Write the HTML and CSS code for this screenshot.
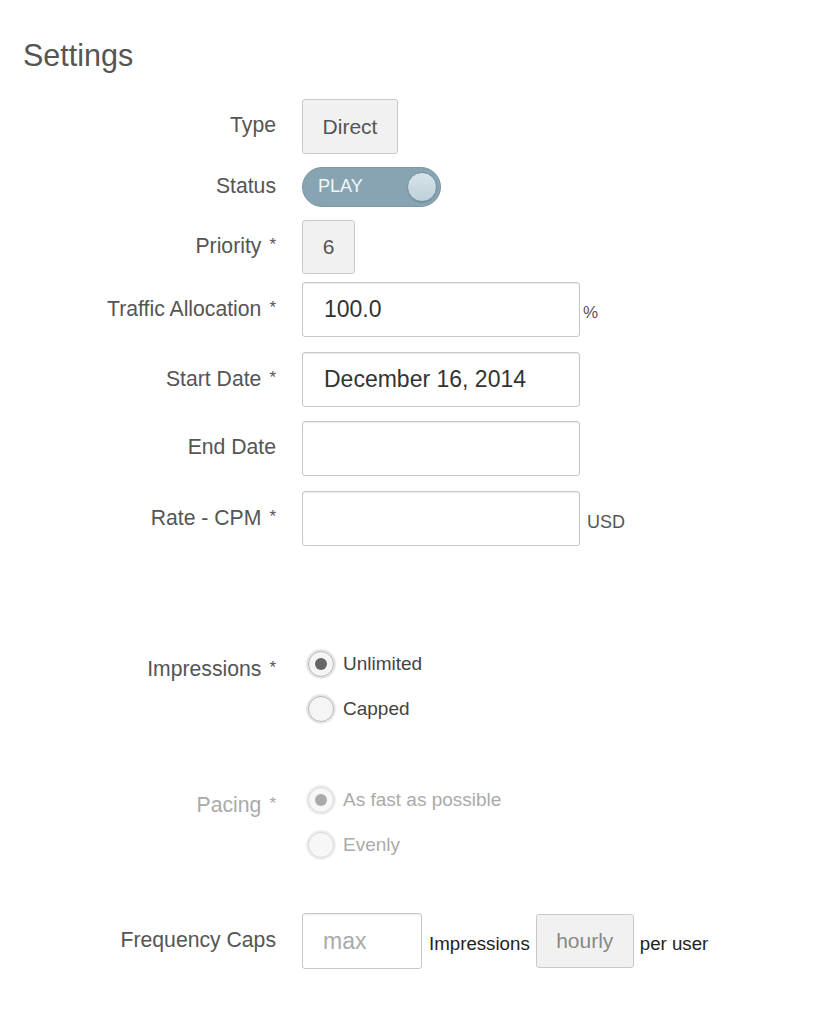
FILE: index.html
```html
<!DOCTYPE html>
<html lang="en">
<head>
<meta charset="utf-8">
<title>Settings</title>
<link rel="stylesheet" href="styles.css">
</head>
<body>
<div class="page">
  <h1 class="title">Settings</h1>
  <form class="form">
    <div class="row">
      <label class="label">Type</label>
      <div class="control"><span class="btn btn-type">Direct</span></div>
    </div>
    <div class="row gap-13">
      <label class="label">Status</label>
      <div class="control">
        <span class="toggle"><span class="toggle-text">PLAY</span><span class="knob"></span></span>
      </div>
    </div>
    <div class="row gap-13">
      <label class="label">Priority<span class="req">*</span></label>
      <div class="control"><span class="btn btn-priority">6</span></div>
    </div>
    <div class="row gap-8">
      <label class="label">Traffic Allocation<span class="req">*</span></label>
      <div class="control">
        <span class="input">100.0</span><span class="unit unit-pct">%</span>
      </div>
    </div>
    <div class="row gap-15">
      <label class="label">Start Date<span class="req">*</span></label>
      <div class="control"><span class="input">December 16, 2014</span></div>
    </div>
    <div class="row gap-14">
      <label class="label">End Date</label>
      <div class="control"><span class="input"></span></div>
    </div>
    <div class="row gap-15">
      <label class="label">Rate - CPM<span class="req">*</span></label>
      <div class="control">
        <span class="input"></span><span class="unit unit-usd">USD</span>
      </div>
    </div>

    <div class="row row-top gap-95">
      <label class="label label-group">Impressions<span class="req">*</span></label>
      <div class="radios">
        <div class="radio-item"><span class="radio checked"><span class="dot"></span></span><span class="radio-text">Unlimited</span></div>
        <div class="radio-item"><span class="radio"></span><span class="radio-text">Capped</span></div>
      </div>
    </div>

    <div class="row row-top gap-46 disabled">
      <label class="label label-group">Pacing<span class="req">*</span></label>
      <div class="radios">
        <div class="radio-item"><span class="radio checked"><span class="dot"></span></span><span class="radio-text">As fast as possible</span></div>
        <div class="radio-item"><span class="radio"></span><span class="radio-text">Evenly</span></div>
      </div>
    </div>

    <div class="row gap-46">
      <label class="label">Frequency Caps</label>
      <div class="control freq">
        <span class="input input-max">max</span>
        <span class="freq-text freq-first">Impressions</span>
        <span class="btn btn-hourly">hourly</span>
        <span class="freq-text">per user</span>
      </div>
    </div>
  </form>
</div>
</body>
</html>
```
FILE: styles.css
```css
html, body {
  margin: 0;
  padding: 0;
  background: #ffffff;
}

body {
  font-family: "Liberation Sans", Arial, Helvetica, sans-serif;
  color: #555555;
}

.page {
  padding-top: 37px;
}

.title {
  margin: 0 0 26px 23px;
  font-size: 30.5px;
  line-height: 36px;
  font-weight: 400;
  color: #555555;
}

.form {
  display: flex;
  flex-direction: column;
}

.row {
  display: grid;
  grid-template-columns: 276px auto;
  column-gap: 26px;
  align-items: center;
}

.row-top {
  align-items: start;
}

.gap-8 { margin-top: 8px; }
.gap-13 { margin-top: 13px; }
.gap-14 { margin-top: 14px; }
.gap-15 { margin-top: 15px; }
.gap-46 { margin-top: 46px; }
.gap-95 { margin-top: 95px; }

.label {
  text-align: right;
  font-size: 21.2px;
  line-height: 24px;
  color: #555555;
  padding-bottom: 3px;
}

.label-group {
  padding-top: 15px;
  padding-bottom: 0;
}

.req {
  display: inline-block;
  margin-left: 8px;
  font-size: 17px;
  vertical-align: 3px;
}

.control {
  display: flex;
  align-items: center;
}

.btn {
  box-sizing: border-box;
  display: flex;
  align-items: center;
  justify-content: center;
  background: #f1f1f1;
  border: 1px solid #c9c9c9;
  border-radius: 3px;
  font-size: 21px;
  color: #555555;
}

.btn-type {
  width: 96px;
  height: 55px;
}

.btn-priority {
  width: 53px;
  height: 54px;
}

.btn-hourly {
  width: 98px;
  height: 54px;
  color: #888888;
  margin-left: 6px;
}

.toggle {
  box-sizing: border-box;
  width: 139px;
  height: 40px;
  border-radius: 20px;
  background: #88a4b3;
  border: 1px solid #7c98a7;
  display: flex;
  align-items: center;
  justify-content: space-between;
  padding: 0 3px 0 15px;
}

.toggle-text {
  font-size: 18px;
  line-height: 20px;
  color: #f3f7f9;
  padding-bottom: 2px;
}

.knob {
  box-sizing: border-box;
  width: 30px;
  height: 30px;
  border-radius: 50%;
  background: linear-gradient(#d8e4ea, #bdd0d9);
  border: 1px solid #7893a2;
  box-shadow: 0 1px 1px rgba(0, 0, 0, 0.15);
}

.input {
  box-sizing: border-box;
  display: flex;
  align-items: center;
  width: 278px;
  height: 55px;
  padding-left: 21px;
  background: #ffffff;
  border: 1px solid #c8c8c8;
  border-radius: 3px;
  box-shadow: inset 0 1px 1px rgba(0, 0, 0, 0.08);
  font-size: 23px;
  color: #333333;
}

.unit {
  align-self: flex-end;
  font-size: 18px;
  line-height: 24px;
  margin-bottom: 12px;
  color: #555555;
}

.unit-pct {
  margin-left: 3px;
  font-size: 17px;
}

.unit-usd {
  margin-left: 7px;
}

.radios {
  display: flex;
  flex-direction: column;
  padding-left: 6px;
}

.radio-item {
  display: flex;
  align-items: center;
  height: 45px;
}

.radio {
  box-sizing: border-box;
  width: 26px;
  height: 26px;
  border-radius: 50%;
  background: #f5f5f5;
  border: 1px solid #b8b8b8;
  box-shadow: 0 0 0 2px #e8e8e8;
  display: flex;
  align-items: center;
  justify-content: center;
  margin-right: 9px;
}

.dot {
  width: 12px;
  height: 12px;
  border-radius: 50%;
  background: #666666;
}

.radio-text {
  font-size: 19px;
  line-height: 24px;
  color: #444444;
}

.disabled .label,
.disabled .radio-text {
  color: #aaaaaa;
}

.disabled .radio {
  border-color: #d8d8d8;
  background: #f7f7f7;
  box-shadow: 0 0 0 2px #eeeeee;
}

.disabled .dot {
  background: #aaaaaa;
}

.freq {
  align-items: center;
}

.input-max {
  width: 120px;
  height: 56px;
  padding-left: 20px;
  font-size: 23px;
  color: #aaaaaa;
}

.freq-text {
  font-size: 18.7px;
  line-height: 24px;
  color: #222222;
  margin-left: 6px;
  padding-top: 5px;
}

.freq-first {
  margin-left: 7px;
}
```
